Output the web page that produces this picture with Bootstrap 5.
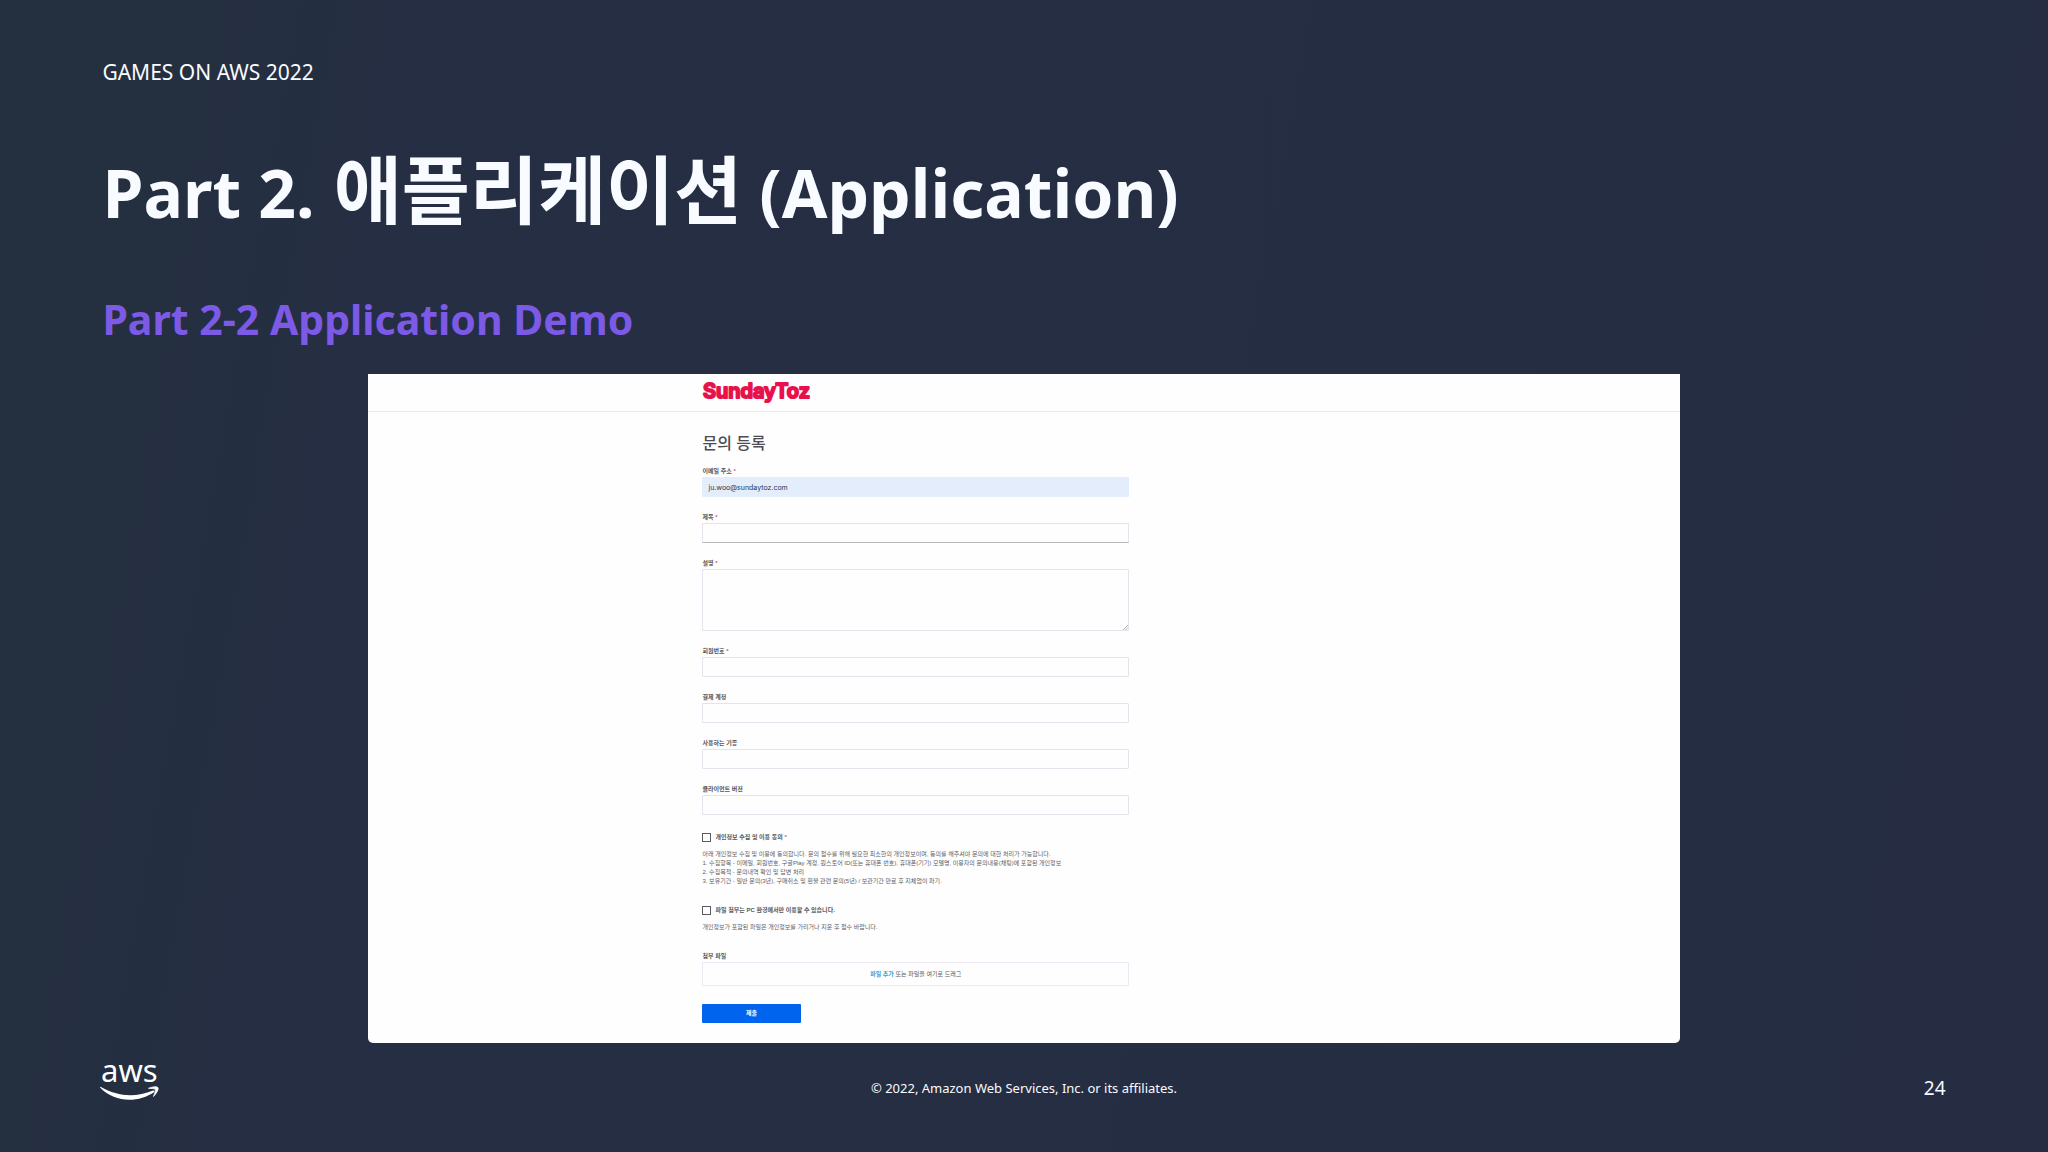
<!DOCTYPE html>
<html lang="ko">
<head>
<meta charset="utf-8">
<meta name="viewport" content="width=device-width, initial-scale=1">
<title>GAMES ON AWS 2022</title>
<link href="https://cdn.jsdelivr.net/npm/bootstrap@5.3.0/dist/css/bootstrap.min.css" rel="stylesheet">
<style>
  body { background: linear-gradient(100deg, #24303f 0, #252e42 18%, #262d42 100%); color: #f8fbff; font-family: "Noto Sans", "Noto Sans CJK KR", sans-serif; }
  .slide { padding: 56px 5% 0; }
  .eyebrow { font-size: 21px; line-height: 32px; margin-bottom: 56px; }
  .slide-title { font-size: 66px; line-height: 96px; margin-bottom: 51px; font-weight: 700; }
  .slide-title span { font-size: 74px; line-height: 1; margin-left: 2px; }
  .slide-sub { font-size: 41px; line-height: 56px; margin-bottom: 27px; font-weight: 700; color: #7c5ae6; }
  .shot { width: 71.2%; background: #fefefe; border-radius: 0 0 5px 5px; color: #55565c; font: 6px/9px "Liberation Sans", "Noto Sans CJK KR", sans-serif; padding-bottom: 20px; }
  .shot-bar { height: 38px; border-bottom: 1px solid #e9e7f0; }
  .shot-col { margin-left: 25.5%; width: 32.5%; }
  .shot-bar svg { display: block; margin: -4px 0; }
  .form-title { font-size: 16px; line-height: 24px; color: #4c4d54; font-weight: 500; margin: 20px 0 11px; }
  .fields { padding-bottom: 2px; }
  .field { margin-bottom: 16px; }
  .field label, .field .drop-label, .tick label { display: block; font-weight: 700; line-height: 9px; }
  .field label, .field .drop-label { margin-bottom: 1px; }
  .req { color: #d9546a; }
  .shot .form-control { font: 7px/10px Inter, sans-serif; padding: 0 5px; height: 20px; min-height: 0; border: 1px solid #e6e3ec; border-radius: 1px; background: #fefefe; color: #2b3444; }
  .shot .form-control.filled { background: #e3edfc; border-color: #e3edfc; }
  .shot .form-control.active { border-bottom-color: #b5b7bd; }
  .shot textarea.form-control { height: 62px; resize: none; }
  .grip { right: 1px; bottom: 1px; }
  .tick { gap: 4px; }
  .shot .form-check-input { width: 9px; height: 9px; border: 1px solid #5b5c63; border-radius: 0; margin: 0; background: none; }
  .note { color: #5c5d63; margin: 8px 0 20px; white-space: nowrap; }
  .drop { height: 24px; border: 1px solid #ece9f2; border-radius: 1px; }
  .drop a { color: #2fa3d6; font-weight: 700; }
  .send { width: 23%; height: 19px; font-size: 6px; line-height: 9px; padding: 0; border: 0; border-radius: 1px; background: #0064ee; color: #fff; font-weight: 700; margin-top: 18px; }
  .foot { padding: 0 5% 26px; }
  .foot svg { margin-left: -8px; }
  .copy { font-size: 13px; line-height: 20px; }
  .page-no { font-size: 19px; line-height: 24px; }
</style>
</head>
<body class="min-vh-100 d-flex flex-column">
<main class="slide">
  <p class="eyebrow">GAMES ON AWS 2022</p>
  <h1 class="slide-title">Part 2. <span>애플리케이션</span> (Application)</h1>
  <h2 class="slide-sub">Part 2-2 Application Demo</h2>
  <section class="shot mx-auto">
    <div class="shot-bar d-flex align-items-center">
      <a class="shot-col d-block lh-1" href="#" aria-label="SundayToz">
        <svg width="120" height="32" viewBox="0 0 120 32"><text x="1" y="21" font-family="Inter, sans-serif" font-weight="600" font-size="20" fill="#e8114b" stroke="#e8114b" stroke-width="2" stroke-linejoin="round">SundayToz</text></svg>
      </a>
    </div>
    <form class="shot-col">
      <h3 class="form-title">문의 등록</h3>
      <div class="fields">
        <div class="field"><label for="mail">이메일 주소 <span class="req">*</span></label><input id="mail" type="email" class="form-control filled" value="ju.woo@sundaytoz.com"></div>
        <div class="field"><label for="subj">제목 <span class="req">*</span></label><input id="subj" type="text" class="form-control active"></div>
        <div class="field"><label for="desc">설명 <span class="req">*</span></label>
          <div class="position-relative"><textarea id="desc" class="form-control d-block"></textarea>
            <svg class="grip position-absolute" width="5" height="5" viewBox="0 0 5 5" stroke="#999aa2" stroke-width=".8"><path d="M0 5L5 0M2.5 5L5 2.5"/></svg></div>
        </div>
        <div class="field"><label for="member">회원번호 <span class="req">*</span></label><input id="member" type="text" class="form-control"></div>
        <div class="field"><label for="pay">결제 계정</label><input id="pay" type="text" class="form-control"></div>
        <div class="field"><label for="device">사용하는 기종</label><input id="device" type="text" class="form-control"></div>
        <div class="field"><label for="client">클라이언트 버전</label><input id="client" type="text" class="form-control"></div>
      </div>
      <div class="tick d-flex align-items-center"><input id="agree" type="checkbox" class="form-check-input"><label for="agree">개인정보 수집 및 이용 동의 <span class="req">*</span></label></div>
      <p class="note">아래 개인정보 수집 및 이용에 동의합니다. 문의 접수를 위해 필요한 최소한의 개인정보이며, 동의를 해주셔야 문의에 대한 처리가 가능합니다.<br>1. 수집항목 - 이메일, 회원번호, 구글Play 계정, 원스토어 ID(또는 휴대폰 번호), 휴대폰(기기) 모델명, 이용자의 문의내용(채팅)에 포함된 개인정보<br>2. 수집목적 - 문의내역 확인 및 답변 처리<br>3. 보유기간 - 일반 문의(3년), 구매취소 및 환불 관련 문의(5년) / 보관기간 만료 후 지체없이 파기.</p>
      <div class="tick d-flex align-items-center"><input id="pc" type="checkbox" class="form-check-input"><label for="pc">파일 첨부는 PC 환경에서만 이용할 수 있습니다.</label></div>
      <p class="note">개인정보가 포함된 파일은 개인정보를 가리거나 지운 후 접수 바랍니다.</p>
      <div class="field mb-0"><span class="drop-label">첨부 파일</span>
        <div class="drop d-flex align-items-center justify-content-center"><span><a href="#" class="text-decoration-none">파일 추가</a> 또는 파일을 여기로 드래그</span></div></div>
      <button type="button" class="btn send d-block">제출</button>
    </form>
  </section>
</main>
<footer class="foot mt-auto row g-0 align-items-center">
  <div class="col"><svg class="d-block" width="76" height="76" viewBox="-8 -12 76 76" role="img" aria-label="aws"><text x="-1" y="20" font-family="Noto Sans, sans-serif" font-size="31" fill="#fff">aws</text><path d="M-2 25.500L-1.500 24.800C16 35 34 35.500 51 28.500Q53 28.200 52.500 30C36 41 13 41 -2 25.500Z" fill="#fff"/><path d="M46.500 26.300Q54 23.500 56 25.600Q57 28.500 51.500 34.500Q54 28.500 53.300 27.300Q52 26.300 46.500 26.300Z" fill="#fff" stroke="#fff" stroke-width=".8"/></svg></div>
  <div class="col-auto copy">© 2022, Amazon Web Services, Inc. or its affiliates.</div>
  <div class="col text-end page-no">24</div>
</footer>
<script src="https://cdn.jsdelivr.net/npm/bootstrap@5.3.0/dist/js/bootstrap.bundle.min.js"></script>
</body>
</html>
